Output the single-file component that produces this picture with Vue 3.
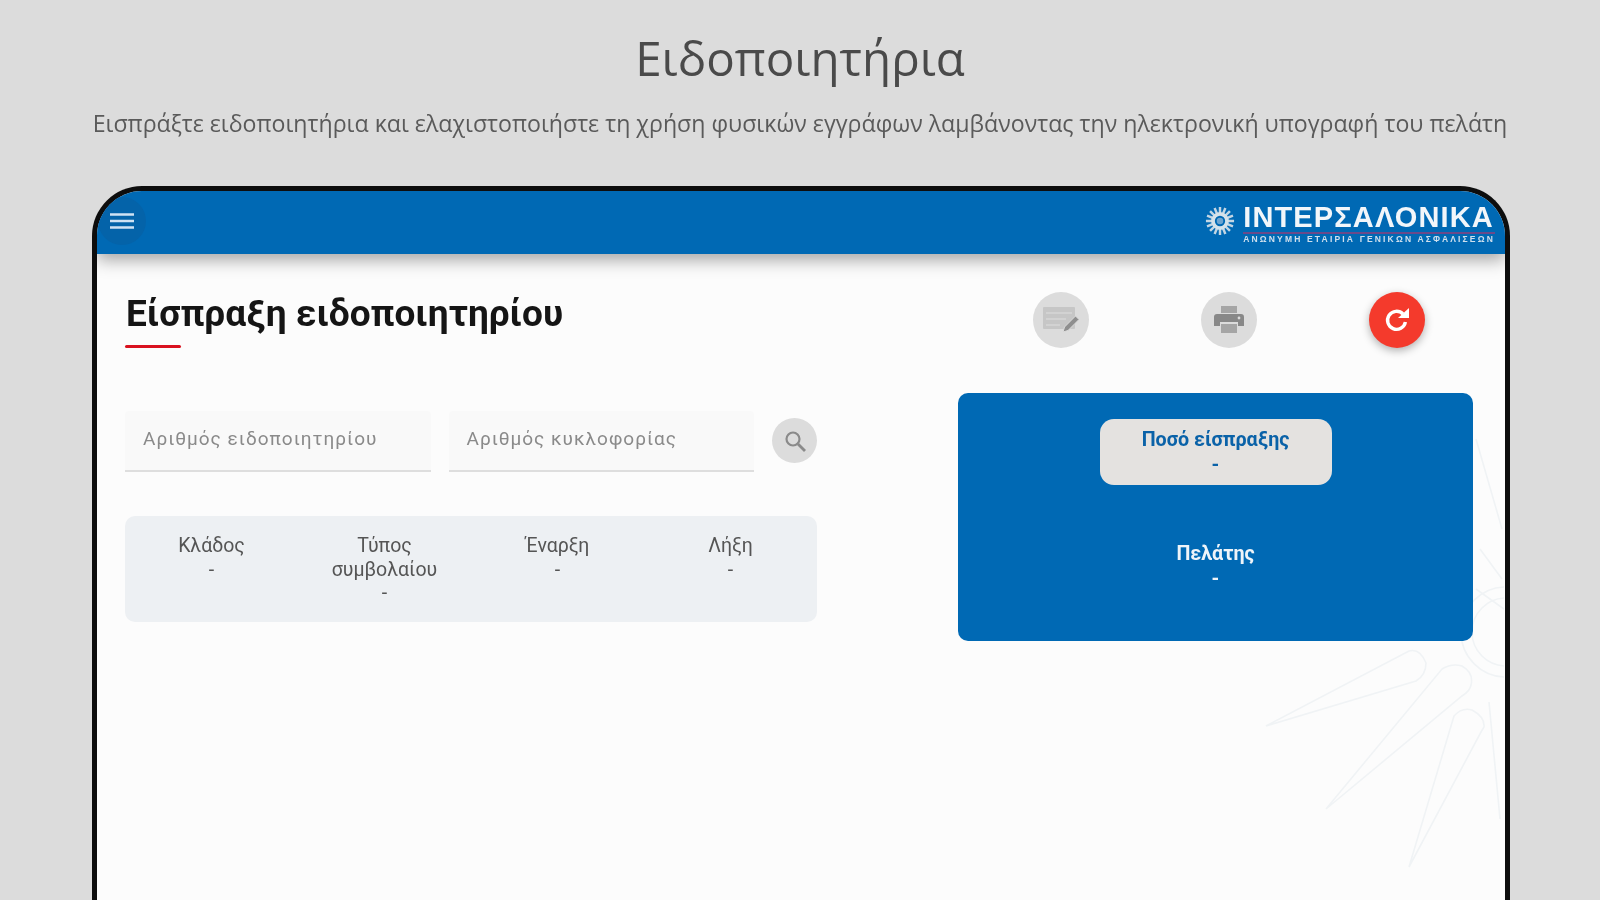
<script setup>
const columns = [
  { label: 'Κλάδος', value: '-' },
  { label: 'Τύπος συμβολαίου', value: '-' },
  { label: 'Έναρξη', value: '-' },
  { label: 'Λήξη', value: '-' }
]
const sunRays = Array.from({ length: 16 }, (_, i) => i * 22.5)
</script>

<template>
  <div class="page">
    <header class="intro">
      <h1>Ειδοποιητήρια</h1>
      <p>Εισπράξτε ειδοποιητήρια και ελαχιστοποιήστε τη χρήση φυσικών εγγράφων λαμβάνοντας την ηλεκτρονική υπογραφή του πελάτη</p>
    </header>

    <section class="device">
      <div class="topbar">
        <button class="menu" aria-label="Μενού">
          <svg width="24" height="18" viewBox="0 0 24 18"><path d="M0 2.5h24M0 9h24M0 15.5h24" stroke="#cfe2f3" stroke-width="2.4" /></svg>
        </button>
        <div class="logo">
          <svg class="logo-sun" width="30" height="30" viewBox="-16 -16 32 32">
            <g stroke="#c3d6e4" stroke-width="2.6">
              <line v-for="r in sunRays" :key="r" x1="0" y1="-7" x2="0" y2="-15" :transform="`rotate(${r})`" />
            </g>
            <circle r="7.5" fill="none" stroke="#d5e2ea" stroke-width="4" />
            <circle r="3.5" fill="#6ea4cf" />
          </svg>
          <div class="logo-text">
            <div class="logo-name">ΙΝΤΕΡΣΑΛΟΝΙΚΑ</div>
            <div class="logo-sub">ΑΝΩΝΥΜΗ ΕΤΑΙΡΙΑ ΓΕΝΙΚΩΝ ΑΣΦΑΛΙΣΕΩΝ</div>
          </div>
        </div>
      </div>

      <div class="content">
        <svg class="watermark" width="300" height="480" viewBox="0 0 300 480" fill="none" stroke="#f0f3f5" stroke-width="1.6">
          <path d="M62 307 L205 232 Q216 229 222 244 Q222 256 212 262 Z" />
          <path d="M122 390 L238 250 Q248 244 258 247 Q270 254 267 266 Q266 272 258 277 Z" />
          <path d="M205 448 L250 297 Q258 288 268 291 Q281 298 280 308 L277 313 Z" />
          <path d="M285 283 L296 400" />
          <circle cx="302" cy="213" r="45" />
          <circle cx="302" cy="213" r="34" />
          <path d="M272 20 L298 110 M276 130 L298 160 M272 170 L300 190" />
        </svg>

        <div class="main">
          <div class="left">
            <h2>Είσπραξη ειδοποιητηρίου</h2>
            <div class="accent"></div>
            <div class="search">
              <div class="field">Αριθμός ειδοποιητηρίου</div>
              <div class="field">Αριθμός κυκλοφορίας</div>
              <button class="search-btn" aria-label="Αναζήτηση">
                <svg width="24" height="24" viewBox="0 0 24 24" fill="none" stroke="#8a8a8a" stroke-width="2.2">
                  <circle cx="10" cy="10" r="6.5" />
                  <path d="M15 15l7 7" stroke-width="2.8" />
                </svg>
              </button>
            </div>
            <div class="details">
              <div v-for="c in columns" :key="c.label" class="detail">
                <div class="detail-label">{{ c.label }}</div>
                <div>{{ c.value }}</div>
              </div>
            </div>
          </div>

          <div class="right">
            <div class="actions">
              <button class="action" aria-label="Υπογραφή">
                <svg width="40" height="30" viewBox="0 0 40 30">
                  <rect x="2" y="2" width="32" height="22" rx="1" fill="#c6c6c6" />
                  <path d="M5 8h26M5 14h20M5 20h14" stroke="#d6d6d6" stroke-width="1.6" />
                  <path d="M22 27l1.500-5 11-11 3.500 3.500-11 11z" fill="#8e8e8e" stroke="#dcdcdc" stroke-width="1" />
                </svg>
              </button>
              <button class="action" aria-label="Εκτύπωση">
                <svg width="34" height="34" viewBox="0 0 34 34">
                  <path d="M9 3h16v7H9z" fill="#a5a5a5" />
                  <path d="M5 11h24a3 3 0 0 1 3 3v9h-6v-4H8v4H2v-9a3 3 0 0 1 3-3z" fill="#888" />
                  <path d="M9 21h16v9H9z" fill="#a5a5a5" />
                  <circle cx="27" cy="15" r="1.4" fill="#dcdcdc" />
                </svg>
              </button>
              <button class="action action-red" aria-label="Ανανέωση">
                <svg width="30" height="30" viewBox="0 0 30 30" fill="none">
                  <path d="M21 9a9 9 0 1 0 2.400 8" stroke="#fff" stroke-width="3.4" />
                  <path d="M16 13h11V3z" fill="#fff" />
                </svg>
              </button>
            </div>
            <div class="summary">
              <div class="amount">
                <div class="amount-label">Ποσό είσπραξης</div>
                <div class="amount-value">-</div>
              </div>
              <div class="customer">
                <div class="customer-label">Πελάτης</div>
                <div>-</div>
              </div>
            </div>
          </div>
        </div>
      </div>
    </section>
  </div>
</template>

<style>
html, body { margin: 0; overflow: hidden; }
</style>

<style scoped>
.page {
  width: 1600px;
  height: 900px;
  overflow: hidden;
  background: #dcdcdc;
  display: flex;
  flex-direction: column;
  align-items: center;
  font-family: Roboto, "Noto Sans", sans-serif;
  filter: blur(0.6px);
}
.intro {
  width: 1600px;
  text-align: center;
  height: 186px;
  flex: none;
}
.intro h1 {
  margin: 26px 0 0;
  font-family: "Open Sans", "Noto Sans", sans-serif;
  font-weight: 400;
  font-size: 47.5px;
  line-height: 64px;
  color: #4a4a4a;
}
.intro p {
  margin: 17px 0 0;
  font-family: "Open Sans", "Noto Sans", sans-serif;
  font-size: 23.17px;
  line-height: 32px;
  color: #5a5a5a;
  white-space: nowrap;
}
.device {
  width: 1418px;
  margin-left: 2px;
  flex: 1;
  box-sizing: border-box;
  border: 5px solid #0d0d0d;
  border-bottom: 0;
  border-radius: 50px 50px 0 0;
  background: #fcfcfc;
  overflow: hidden;
  display: flex;
  flex-direction: column;
}
.topbar {
  height: 63px;
  flex: none;
  background: #0069b4;
  box-shadow: 0 6px 16px rgba(0, 0, 0, 0.35);
  display: flex;
  align-items: center;
  justify-content: space-between;
  position: relative;
  z-index: 1;
  padding: 0 10px 0 0;
}
.menu {
  width: 48px;
  height: 48px;
  margin: 0 0 4px 1px;
  border: 0;
  padding: 0;
  border-radius: 50%;
  background: #0463a9;
  display: flex;
  align-items: center;
  justify-content: center;
}
.logo {
  display: flex;
  align-items: center;
  gap: 8px;
}
.logo-sun { margin-top: -3px; }
.logo-name {
  font-family: "Liberation Sans", sans-serif;
  font-weight: 700;
  font-size: 29px;
  line-height: 30px;
  letter-spacing: 1.15px;
  color: #f2f6fa;
  border-bottom: 2px solid #6a4a8a;
  white-space: nowrap;
}
.logo-sub {
  font-family: "Liberation Sans", sans-serif;
  font-weight: 700;
  font-size: 8.5px;
  line-height: 10px;
  letter-spacing: 2.17px;
  color: #cfe0ee;
  white-space: nowrap;
}
.content {
  flex: 1;
  position: relative;
}
.watermark {
  position: absolute;
  left: 1107px;
  top: 165px;
}
.main {
  position: relative;
  display: flex;
  justify-content: space-between;
  padding: 0 32px 0 28px;
}
.left { width: 692px; }
.left h2 {
  margin: 36px 0 0 1px;
  font-family: Roboto, "Open Sans", sans-serif;
  font-weight: 700;
  font-size: 37px;
  line-height: 48px;
  color: #151515;
  white-space: nowrap;
}
.accent {
  width: 56px;
  height: 3px;
  margin-top: 7px;
  background: #d9121f;
  border-radius: 2px;
}
.search {
  display: flex;
  align-items: center;
  gap: 18px;
  margin-top: 63px;
}
.field {
  width: 306px;
  height: 61px;
  box-sizing: border-box;
  padding: 0 0 4px 18px;
  display: flex;
  align-items: center;
  background: #f9f9f9;
  border-bottom: 2px solid #dedede;
  border-radius: 4px 4px 0 0;
  font-size: 19px;
  letter-spacing: 1px;
  color: #8a8a8a;
}
.search-btn {
  width: 45px;
  height: 45px;
  margin-bottom: 2px;
  border: 0;
  padding: 0;
  border-radius: 50%;
  background: #dcdcdc;
  display: flex;
  align-items: center;
  justify-content: center;
}
.details {
  display: grid;
  grid-template-columns: repeat(4, minmax(0, 1fr));
  margin-top: 44px;
  height: 106px;
  box-sizing: border-box;
  padding-top: 18px;
  background: #edf0f3;
  border-radius: 10px;
  font-size: 19.5px;
  line-height: 23.5px;
  color: #555;
  text-align: center;
}
.detail-label { padding: 0 30px; }
.right {
  width: 515px;
  display: flex;
  flex-direction: column;
}
.actions {
  display: flex;
  justify-content: space-between;
  padding: 38px 48px 0 75px;
}
.action {
  width: 56px;
  height: 56px;
  border: 0;
  padding: 0;
  border-radius: 50%;
  background: #dcdcdc;
  display: flex;
  align-items: center;
  justify-content: center;
}
.action-red {
  background: #f43a2c;
  box-shadow: 0 3px 8px rgba(0, 0, 0, 0.3);
}
.summary {
  margin-top: 45px;
  height: 248px;
  box-sizing: border-box;
  padding-top: 26px;
  background: #0069b4;
  border-radius: 10px;
  display: flex;
  flex-direction: column;
  align-items: center;
  color: #eef4f9;
  font-size: 19.7px;
  line-height: 25px;
  text-align: center;
}
.amount {
  width: 232px;
  height: 66px;
  background: #e4e2e0;
  border-radius: 14px;
  color: #0a62a8;
  font-weight: 700;
  padding-top: 8px;
  box-sizing: border-box;
}
.customer {
  margin-top: 56px;
  font-weight: 700;
}
</style>
